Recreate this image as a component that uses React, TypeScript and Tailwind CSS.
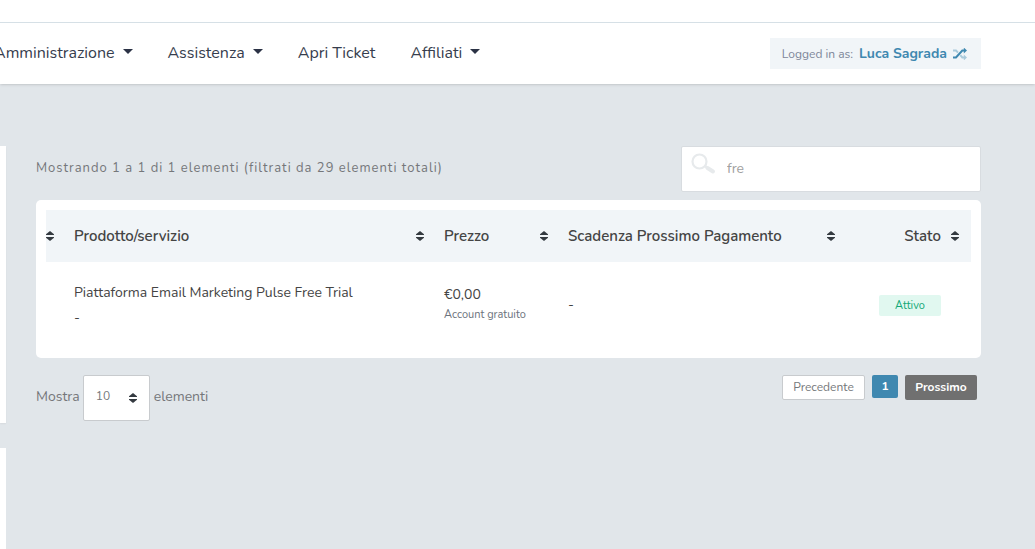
import { useState } from "react";
import clsx from "clsx";

const navItems = [
  { label: "Amministrazione", menu: true },
  { label: "Assistenza", menu: true },
  { label: "Apri Ticket", menu: false },
  { label: "Affiliati", menu: true },
];

const columns = [
  { label: "", width: "w-[18px]" },
  { label: "Prodotto/servizio", width: "" },
  { label: "Prezzo", width: "w-[124px]" },
  { label: "Scadenza Prossimo Pagamento", width: "w-[287px]" },
  { label: "Stato", width: "w-[126px]" },
];

const services = [
  {
    name: "Piattaforma Email Marketing Pulse Free Trial",
    domain: "-",
    price: "€0,00",
    cycle: "Account gratuito",
    due: "-",
    status: "Attivo",
  },
];

const SortIcon = ({ className }: { className?: string }) => (
  <svg viewBox="0 0 8 10" className={clsx("h-2.5 w-2 shrink-0 fill-[#343a40]", className)} aria-hidden="true">
    <path d="M4 0 8 3.2V4H0v-.8z" />
    <path d="M4 10 0 6.8V6h8v.8z" />
  </svg>
);

const ShuffleIcon = () => (
  <svg viewBox="0 0 14 12" className="h-3 w-3.5" fill="none" aria-hidden="true">
    <g stroke="#a9cadb" strokeWidth="2">
      <path d="M0 2.500h3L5 4.600M7.300 7.200 9.300 9.500h2" />
      <path d="M10.800 6.500v6L14 9.500z" fill="#a9cadb" stroke="none" />
    </g>
    <g stroke="#3f88b0" strokeWidth="2">
      <path d="M0 9.500h3L9.300 2.500h2" />
      <path d="M10.800-.5v6L14 2.500z" fill="#3f88b0" stroke="none" />
    </g>
  </svg>
);

const SearchIcon = () => (
  <svg viewBox="0 0 26 22" className="h-[22px] w-[26px]" fill="none" stroke="#e7eaec" aria-hidden="true">
    <circle cx="9.500" cy="8.500" r="7" strokeWidth="2.200" />
    <path d="m15 13 2 1.500" strokeWidth="2.500" />
    <path d="m17.500 15 5.500 3.500" strokeWidth="4" strokeLinecap="round" />
  </svg>
);

const Header = () => (
  <header className="relative bg-white shadow-sm">
    <div className="h-[23px] border-b border-[#d6e0e6]" />
    <div className="flex h-[61px] items-center justify-between overflow-hidden pr-[54px]">
      <nav className="-ml-1.5 flex items-center gap-[35px] pb-0.5">
        {navItems.map((item) => (
          <a key={item.label} href="#" className="flex items-center gap-2 text-base whitespace-nowrap text-[#363d4d]">
            {item.label}
            {item.menu && (
              <svg viewBox="0 0 10 5" className="mb-0.5 h-[5px] w-2.5 fill-[#2b3245]" aria-hidden="true">
                <path d="M0 0h10L5 5z" />
              </svg>
            )}
          </a>
        ))}
      </nav>
      <div className="flex h-[31px] items-center bg-[#f1f5f8] pr-3.5 pl-3 text-xs whitespace-nowrap text-[#7d8698]">
        Logged in as:
        <a href="#" className="ml-1.5 flex items-center gap-1.5 text-sm font-bold text-[#3f88b0]">
          Luca Sagrada
          <ShuffleIcon />
        </a>
      </div>
    </div>
  </header>
);

const ServicesTable = () => (
  <div className="rounded-[5px] bg-white p-2.5">
    <table className="w-full table-fixed text-left text-[#444]">
      <thead>
        <tr className="h-[52px] bg-[#f1f5f8]">
          {columns.map((col, index) => (
            <th key={index} className={clsx("p-0 font-semibold", col.width)}>
              <button
                type="button"
                aria-label={col.label || "Ordina"}
                className={clsx(
                  "flex w-full items-center text-[15px] whitespace-nowrap",
                  index === 0 && "pr-2.5",
                  index > 0 && index < 4 && "justify-between px-2.5",
                  index === 4 && "justify-end gap-2.5 pr-3"
                )}
              >
                {col.label}
                <SortIcon />
              </button>
            </th>
          ))}
        </tr>
      </thead>
      <tbody>
        {services.map((service) => (
          <tr key={service.name} className="h-[86px] text-sm">
            <td />
            <td className="px-2.5 leading-[25px]">
              <p>{service.name}</p>
              <p>{service.domain}</p>
            </td>
            <td className="px-2.5">
              <p>{service.price}</p>
              <p className="text-[11px] leading-5 whitespace-nowrap text-[#6c737d]">{service.cycle}</p>
            </td>
            <td className="px-2.5">{service.due}</td>
            <td className="pr-[30px] text-right">
              <span className="inline-block w-[62px] rounded-xs bg-[#e1f8f0] text-center text-[11px] leading-[21px] text-[#12a877]">
                {service.status}
              </span>
            </td>
          </tr>
        ))}
      </tbody>
    </table>
  </div>
);

export default function App() {
  const [query, setQuery] = useState("fre");
  const [pageSize, setPageSize] = useState("10");

  return (
    <div className="flex min-h-screen flex-col bg-[#e1e6ea] font-['Nunito','Lato',sans-serif]">
      <Header />
      <div className="flex flex-1 gap-[30px] pt-[62px] pr-[54px]">
        <aside className="flex w-1.5 shrink-0 flex-col gap-[25px]">
          <div className="h-[277px] bg-white shadow-xs" />
          <div className="flex-1 bg-white" />
        </aside>
        <main className="min-w-0 flex-1 text-[#75777a]">
          <div className="mb-2 flex items-start justify-between">
            <p className="pt-3 text-[13px] leading-5 tracking-[1px]">
              Mostrando 1 a 1 di 1 elementi (filtrati da 29 elementi totali)
            </p>
            <label className="flex h-[46px] w-[300px] items-start rounded-xs border border-[#d8dce0] bg-white pt-1.5 pl-2">
              <SearchIcon />
              <input
                type="text"
                aria-label="Cerca"
                value={query}
                onChange={(e) => setQuery(e.target.value)}
                className="h-[30px] min-w-0 flex-1 pl-[11px] text-sm text-[#a0a0a0] outline-none"
              />
            </label>
          </div>

          <ServicesTable />

          <div className="flex items-start justify-between pt-[17px] pr-1">
            <div className="flex items-center gap-[3px] text-sm">
              <label htmlFor="page-size" className="pb-0.5">Mostra</label>
              <div className="relative">
                <select
                  id="page-size"
                  value={pageSize}
                  onChange={(e) => setPageSize(e.target.value)}
                  className="h-[46px] w-[67px] appearance-none rounded-xs border border-[#c8cbce] bg-white px-3 pb-1 text-xs"
                >
                  <option>10</option>
                  <option>25</option>
                  <option>50</option>
                </select>
                <SortIcon className="pointer-events-none absolute top-[18px] right-[13px]" />
              </div>
              <span className="pb-0.5 pl-px">elementi</span>
            </div>
            <div className="flex items-start gap-[7px] text-xs">
              <button type="button" className="h-[25px] w-[83px] rounded-xs border border-[#c8cbce] bg-white pb-0.5">
                Precedente
              </button>
              <button type="button" className="h-[23px] w-[26px] rounded-xs bg-[#3f88b0] pb-0.5 font-bold text-white">
                1
              </button>
              <button type="button" className="h-[25px] w-[72px] rounded-xs bg-[#707070] pb-0.5 font-bold text-white">
                Prossimo
              </button>
            </div>
          </div>
        </main>
      </div>
    </div>
  );
}
